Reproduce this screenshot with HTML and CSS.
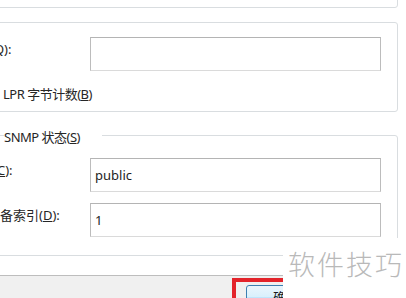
FILE: index.html
```html
<!DOCTYPE html>
<html lang="zh-CN">
<head>
<meta charset="utf-8">
<title>端口设置</title>
<link rel="stylesheet" href="styles.css">
</head>
<body>
<div class="panel">
  <div class="group group-top"></div>

  <div class="group group-lpr">
    <div class="row">
      <label class="label"><span class="clip clip-q">队列名称(</span><u>Q</u>):</label>
      <div class="input"></div>
    </div>
    <div class="check-text">LPR 字节计数(<u>B</u>)</div>
  </div>

  <div class="group group-snmp">
    <div class="legend">SNMP 状态(<u>S</u>)</div>
    <div class="row row-first">
      <label class="label"><span class="clip clip-c">社区名称(</span><u>C</u>):</label>
      <div class="input">public</div>
    </div>
    <div class="row row-gap">
      <label class="label"><span class="clip clip-d">SNMP 设</span>备索引(<u>D</u>):</label>
      <div class="input">1</div>
    </div>
  </div>
</div>

<div class="footer">
  <div class="highlight">
    <button class="btn">确定</button>
  </div>
</div>

<div class="watermark">软件技巧</div>
</body>
</html>
```

FILE: styles.css
```css
* { box-sizing: border-box; }

html, body {
  margin: 0;
  padding: 0;
  width: 406px;
  height: 298px;
  overflow: hidden;
  background: #ffffff;
}

body {
  position: relative;
  font-family: "Noto Sans", "Noto Sans CJK SC", sans-serif;
  font-size: 13px;
  color: #262626;
}

.panel {
  margin: 0 8px 0 -24px;
}

.group {
  border: 1px solid #d9dde0;
  border-radius: 3px;
  padding-left: 23px;
}

.group-top {
  margin-top: -30px;
  height: 38px;
}

.group-lpr {
  margin-top: 14px;
  height: 90px;
  padding-top: 14px;
}

.group-snmp {
  margin-top: 23px;
  height: 121px;
}

.row {
  display: flex;
  align-items: flex-start;
}

.row-first { margin-top: 12px; }
.row-gap { margin-top: 11px; }

.label {
  width: 90px;
  flex: none;
  margin-top: 4px;
  line-height: 17px;
  white-space: nowrap;
}

.clip-q { margin-left: -62px; }
.clip-c { margin-left: -59px; }
.clip-d { margin-left: -53px; }

.input {
  width: 291px;
  height: 34px;
  border: 1px solid;
  border-color: #b4b4b4 #bcbcbc #dadada #bcbcbc;
  padding: 0 4px;
  line-height: 32px;
  color: #1e1e1e;
  background: #fff;
}

.check-text {
  margin-top: 15px;
  margin-left: 3px;
  line-height: 17px;
  letter-spacing: -0.5px;
}

.legend {
  margin-top: -7px;
  margin-left: 4px;
  width: 98px;
  line-height: 17px;
  background: #fff;
  white-space: nowrap;
  letter-spacing: -0.5px;
}

.footer {
  margin-top: 19px;
  height: 23px;
  overflow: hidden;
  border-top: 1px solid #bdbdbd;
  background: #f0f0f0;
  padding: 2px 0 0 232px;
}

.highlight {
  width: 120px;
  height: 40px;
  border: 4px solid #e3232a;
  padding: 3px 0 0 10px;
}

.btn {
  width: 75px;
  height: 24px;
  border: 1px solid #3c7fb1;
  border-radius: 3px;
  background: linear-gradient(#eaf6fd, #d9f0fc 50%, #bee6fd 51%, #a7d9f5);
  font-family: "Noto Sans CJK SC", sans-serif;
  font-size: 13px;
  color: #1a1a1a;
  padding: 0 0 0 8px;
  line-height: 20px;
  text-align: left;
  text-indent: 18px;
}

.watermark {
  position: absolute;
  left: 283px;
  top: 238px;
  width: 123px;
  height: 60px;
  background: #ffffff;
  padding: 11px 0 0 5px;
  font-family: "Noto Sans CJK SC", sans-serif;
  font-weight: 300;
  font-size: 27px;
  line-height: 30px;
  letter-spacing: 2px;
  color: #b9b9b9;
  white-space: nowrap;
}
```
